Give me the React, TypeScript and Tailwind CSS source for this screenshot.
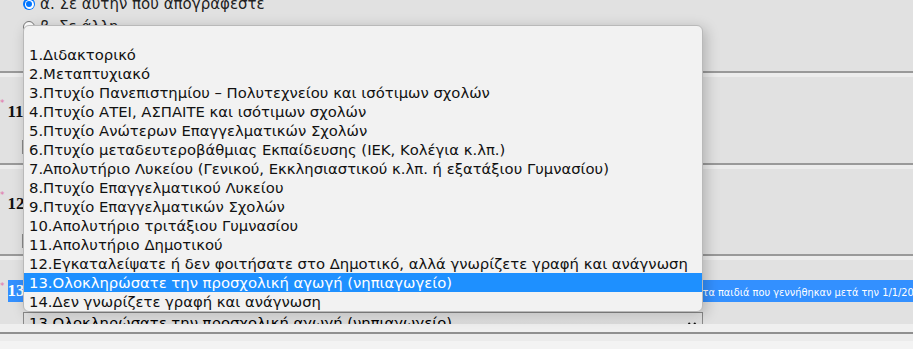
import React from "react";

const options = [
  "",
  "1.Διδακτορικό",
  "2.Μεταπτυχιακό",
  "3.Πτυχίο Πανεπιστημίου – Πολυτεχνείου και ισότιμων σχολών",
  "4.Πτυχίο ΑΤΕΙ, ΑΣΠΑΙΤΕ και ισότιμων σχολών",
  "5.Πτυχίο Ανώτερων Επαγγελματικών Σχολών",
  "6.Πτυχίο μεταδευτεροβάθμιας Εκπαίδευσης (ΙΕΚ, Κολέγια κ.λπ.)",
  "7.Απολυτήριο Λυκείου (Γενικού, Εκκλησιαστικού κ.λπ. ή εξατάξιου Γυμνασίου)",
  "8.Πτυχίο Επαγγελματικού Λυκείου",
  "9.Πτυχίο Επαγγελματικών Σχολών",
  "10.Απολυτήριο τριτάξιου Γυμνασίου",
  "11.Απολυτήριο Δημοτικού",
  "12.Εγκαταλείψατε ή δεν φοιτήσατε στο Δημοτικό, αλλά γνωρίζετε γραφή και ανάγνωση",
  "13.Ολοκληρώσατε την προσχολική αγωγή (νηπιαγωγείο)",
  "14.Δεν γνωρίζετε γραφή και ανάγνωση",
];

const selected = 13;

function Separator() {
  return (
    <div className="flex flex-col">
      <div className="h-[2px] bg-[#999999]" />
      <div className="h-[4px] bg-[#ececec]" />
    </div>
  );
}

function QuestionLabel({ num }: { num: string }) {
  return (
    <div className="flex items-start">
      <span className="text-[9px] leading-none text-[#e070a8] mt-[-4px]">*</span>
      <span className="ml-[3px] font-['Liberation_Serif',serif] font-bold text-[17px] leading-none text-[#111]">
        {num}
      </span>
    </div>
  );
}

function SelectStub() {
  return <div className="ml-[22px] w-[678px] h-[14px] border border-[#8a8a8a] bg-[#dcdcdc]" />;
}

export default function App() {
  return (
    <div className="relative w-[913px] h-[349px] overflow-hidden bg-[#e1e1e1] font-['DejaVu_Sans',sans-serif] text-black">
      {/* Top: residence radios */}
      <div className="h-[71px] flex flex-col overflow-hidden">
        <div className="flex items-center h-[12px] mt-[-2px] ml-[23px] gap-[5px]">
          <span className="w-[12px] h-[12px] rounded-full bg-[#0075ff] flex items-center justify-center">
            <span className="w-[9px] h-[9px] rounded-full bg-white flex items-center justify-center">
              <span className="w-[6px] h-[6px] rounded-full bg-[#0075ff]" />
            </span>
          </span>
          <span className="text-[15px] leading-none text-[#222]">α. Σε αυτήν που απογράφεστε</span>
        </div>
        <div className="flex items-center h-[12px] mt-[11px] ml-[23px] gap-[5px]">
          <span className="w-[12px] h-[12px] rounded-full border border-[#767676] bg-white" />
          <span className="text-[15px] leading-none text-[#222]">β. Σε άλλη</span>
        </div>
      </div>
      <Separator />

      {/* Question 11 */}
      <div className="h-[86px] flex flex-col overflow-hidden">
        <div className="mt-[26px]">
          <QuestionLabel num="11" />
        </div>
        <div className="mt-[20px]">
          <SelectStub />
        </div>
      </div>
      <Separator />

      {/* Question 12 */}
      <div className="h-[85px] flex flex-col overflow-hidden">
        <div className="mt-[26px]">
          <QuestionLabel num="12" />
        </div>
        <div className="mt-[22px]">
          <SelectStub />
        </div>
      </div>
      <Separator />

      {/* Question 13 (text selected) */}
      <div className="h-[64px] flex flex-col overflow-hidden">
        <div className="mt-[20px] flex items-end h-[22px] shrink-0 whitespace-nowrap">
          <span className="text-[9px] leading-none text-[#e070a8] self-start mt-[2px]">*</span>
          <span className="ml-[3px] h-full flex items-end pb-[3px] bg-[#3390ff] text-white font-['Liberation_Serif',serif] font-bold text-[17px] leading-none">
            13
          </span>
          <span className="h-full flex items-end pb-[4px] pl-[678px] bg-[#3390ff] text-white text-[9.8px] leading-none">
            τα παιδιά που γεννήθηκαν μετά την 1/1/2014
          </span>
        </div>
        <div className="mt-[10px] ml-[23px] w-[680px] h-[22px] shrink-0 border border-[#8a8a8a] bg-gradient-to-b from-[#e8e8e8] to-[#d2d2d2] flex items-start justify-between px-[5px] pt-[1px]">
          <span className="text-[14.8px] leading-[18px]">{options[selected]}</span>
          <svg width="10" height="10" viewBox="0 0 10 10" className="mt-[6px]">
            <path d="M1.5 3 L5 6.5 L8.5 3" fill="none" stroke="#111" strokeWidth="1.8" />
          </svg>
        </div>
      </div>

      {/* Bottom bar */}
      <div className="flex flex-col bg-[#efefef]">
        <div className="h-[8px]" />
        <div className="h-[2px] bg-[#8f8f8f]" />
        <div className="h-[7px] bg-[#ebebeb]" />
        <div className="h-[9px] bg-[#f3f3f3]" />
      </div>

      {/* Open select dropdown */}
      <div className="absolute left-[23px] top-[25px] w-[680px] flex flex-col bg-[#f2f2f2] border border-[#b9b9b9] rounded-[6px] overflow-hidden shadow-[3px_3px_14px_rgba(0,0,0,0.22)]">
        {options.map((opt, i) => (
          <div
            key={i}
            className={
              i === selected
                ? "h-[19px] px-[5px] text-[14.8px] leading-[19px] whitespace-nowrap bg-[#1e90ff] text-white"
                : "h-[19px] px-[5px] text-[14.8px] leading-[19px] whitespace-nowrap text-[#111]"
            }
          >
            {opt}
          </div>
        ))}
      </div>
    </div>
  );
}
